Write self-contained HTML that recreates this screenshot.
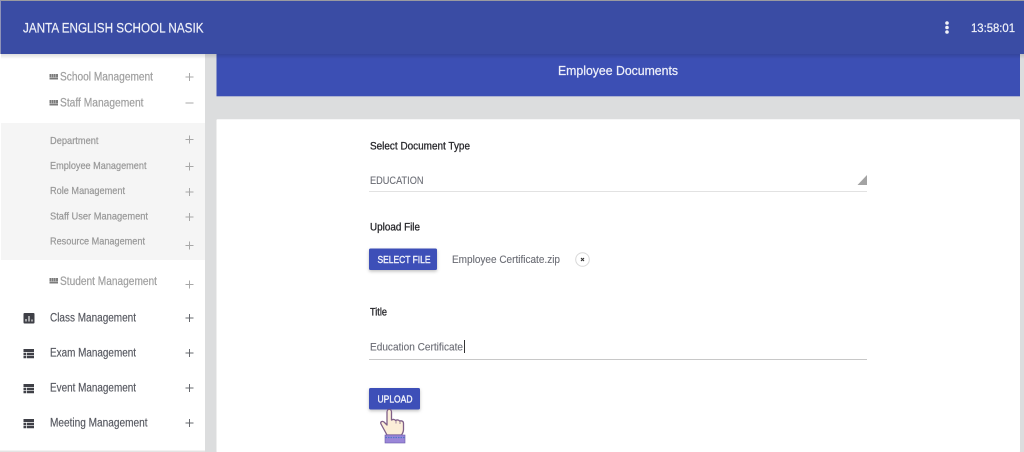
<!DOCTYPE html>
<html><head><meta charset="utf-8"><title>Employee Documents</title>
<style>
html,body{margin:0;padding:0;width:1024px;height:452px;overflow:hidden;background:#fff}
svg{display:block;position:absolute;left:0;top:0;filter:blur(.3px)}
text{font-family:"Liberation Sans",sans-serif;stroke-width:.22px;paint-order:stroke}
.n{stroke:#a0a0a0}.s{stroke:#989898}.d{stroke:#55575f;stroke-width:.16px}.l{stroke:#26262a;stroke-width:.28px}.w{stroke:#eef0fa}.v{stroke:#6b6d75;stroke-width:.12px}.b{stroke:#eef0fa;stroke-width:.38px}
</style></head><body>
<svg width="1024" height="452" viewBox="0 0 1024 452" xmlns="http://www.w3.org/2000/svg">
<defs>
<linearGradient id="sh" x1="0" y1="0" x2="0" y2="1"><stop offset="0" stop-color="#000" stop-opacity=".22"/><stop offset="1" stop-color="#000" stop-opacity="0"/></linearGradient>
<filter id="bs" x="-20%" y="-40%" width="140%" height="200%"><feDropShadow dx="0" dy="1.5" stdDeviation="1.5" flood-color="#000" flood-opacity=".25"/></filter>
</defs>
<rect width="1024" height="452" fill="#fff"/>
<!-- main bg -->
<rect x="205" y="54" width="819" height="398" fill="#dcddde"/>
<rect x="216.500" y="54" width="803.500" height="42.300" fill="#3c4fb4"/>
<text class="w" x="558" y="75" font-size="12.500" fill="#eef0fa" textLength="120" lengthAdjust="spacingAndGlyphs">Employee Documents</text>
<rect x="216.500" y="119.300" width="803.500" height="333" rx="1" fill="#fff"/>
<!-- sidebar -->
<rect x="0" y="54" width="205" height="398" fill="#fff"/>
<rect x="1" y="123" width="204" height="137" fill="#f5f5f5"/>
<rect x="0" y="450.500" width="205" height="2" fill="#e4e4e4"/>
<g fill="#a0a0a0">
<text class="n" x="60" y="80.500" font-size="11.500" textLength="93" lengthAdjust="spacingAndGlyphs">School Management</text>
<text class="n" x="60" y="106.500" font-size="11.500" textLength="83.500" lengthAdjust="spacingAndGlyphs">Staff Management</text>
<text class="n" x="60" y="285" font-size="11.500" textLength="97" lengthAdjust="spacingAndGlyphs">Student Management</text>
</g>
<g fill="#7c7c7c">
<rect x="49.500" y="74" width="8.500" height="5.500"/><rect x="49.500" y="100" width="8.500" height="5.500"/><rect x="49.500" y="278" width="8.500" height="5.500"/>
</g>
<g stroke="#fff" stroke-width=".35"><path d="M51.600 74v3.500M53.700 74v3.500M55.800 74v3.500M51.600 100v3.500M53.700 100v3.500M55.800 100v3.500M51.600 278v3.500M53.700 278v3.500M55.800 278v3.500"/><path d="M49.500 77.500h8.500M49.500 103.500h8.500M49.500 281.500h8.500"/></g>
<g fill="#989898" font-size="10.500">
<text class="s" x="50" y="144" textLength="48.500" lengthAdjust="spacingAndGlyphs">Department</text>
<text class="s" x="50" y="169" textLength="96.500" lengthAdjust="spacingAndGlyphs">Employee Management</text>
<text class="s" x="50" y="194" textLength="75" lengthAdjust="spacingAndGlyphs">Role Management</text>
<text class="s" x="50" y="219.500" textLength="98" lengthAdjust="spacingAndGlyphs">Staff User Management</text>
<text class="s" x="50" y="244.500" textLength="95" lengthAdjust="spacingAndGlyphs">Resource Management</text>
</g>
<g fill="#55575f" font-size="11.500">
<text class="d" x="50" y="321.500" textLength="86" lengthAdjust="spacingAndGlyphs">Class Management</text>
<text class="d" x="50" y="356.500" textLength="86" lengthAdjust="spacingAndGlyphs">Exam Management</text>
<text class="d" x="50" y="391.500" textLength="86" lengthAdjust="spacingAndGlyphs">Event Management</text>
<text class="d" x="50" y="426.500" textLength="97.500" lengthAdjust="spacingAndGlyphs">Meeting Management</text>
</g>
<!-- plus icons -->
<g stroke="#a8a8a8" stroke-width="1" fill="none">
<path d="M185.500 77h8M189.500 73v8"/>
<path d="M185.500 103h8"/>
<path d="M185.500 139.500h8M189.500 135.500v8"/>
<path d="M185.500 166.500h8M189.500 162.500v8"/>
<path d="M185.500 192h8M189.500 188v8"/>
<path d="M185.500 217h8M189.500 213v8"/>
<path d="M185.500 245.500h8M189.500 241.500v8"/>
<path d="M185.500 284.500h8M189.500 280.500v8"/>
</g>
<g stroke="#66686e" stroke-width="1" fill="none">
<path d="M185.500 318h8M189.500 314v8"/>
<path d="M185.500 353h8M189.500 349v8"/>
<path d="M185.500 388h8M189.500 384v8"/>
<path d="M185.500 423h8M189.500 419v8"/>
</g>
<!-- main sidebar icons -->
<rect x="23.500" y="313" width="11" height="10.500" rx="1" fill="#3f4047"/>
<path d="M26 321.500v-2.500M29 321.500v-5.500M32 321.500v-2" stroke="#e8e8e8" stroke-width="1.200" fill="none"/>
<g fill="#3f4047">
<path d="M23.500 349h10.500v3H23.500zM23.500 352.700h2.800v2.400h-2.800zM27 352.700h7v2.400h-7zM23.500 355.800h2.800v2.400h-2.800zM27 355.800h7v2.400h-7z"/>
<path d="M23.500 384h10.500v3H23.500zM23.500 387.700h2.800v2.400h-2.800zM27 387.700h7v2.400h-7zM23.500 390.800h2.800v2.400h-2.800zM27 390.800h7v2.400h-7z"/>
<path d="M23.500 419h10.500v3H23.500zM23.500 422.700h2.800v2.400h-2.800zM27 422.700h7v2.400h-7zM23.500 425.800h2.800v2.400h-2.800zM27 425.800h7v2.400h-7z"/>
</g>
<!-- header -->
<rect x="1" y="54" width="1023" height="5" fill="url(#sh)" opacity=".6"/>
<rect width="1024" height="54" fill="#3a4ca4"/>
<rect width="1024" height="1" fill="#9a9aa0"/>
<rect width="1" height="54" fill="#8f93b8"/>
<text class="w" x="23" y="32.500" font-size="13.500" fill="#eef0f8" textLength="180.500" lengthAdjust="spacingAndGlyphs">JANTA ENGLISH SCHOOL NASIK</text>
<circle cx="947" cy="23" r="1.800" fill="#f2f3f9"/><circle cx="947" cy="27.500" r="1.800" fill="#f2f3f9"/><circle cx="947" cy="32" r="1.800" fill="#f2f3f9"/>
<text class="w" x="971" y="32" font-size="11.500" fill="#eef0f8" textLength="44" lengthAdjust="spacingAndGlyphs">13:58:01</text>
<!-- form -->
<text class="l" x="370" y="149.500" font-size="11" fill="#26262a" textLength="100" lengthAdjust="spacingAndGlyphs">Select Document Type</text>
<text class="v" x="370" y="184" font-size="11" fill="#6b6d75" textLength="53.500" lengthAdjust="spacingAndGlyphs">EDUCATION</text>
<rect x="369" y="191" width="498" height="1" fill="#e2e2e2"/>
<path d="M867 175v10h-9.500z" fill="#a3a3a3"/>
<text class="l" x="370" y="230.500" font-size="11" fill="#26262a" textLength="50" lengthAdjust="spacingAndGlyphs">Upload File</text>
<rect x="369" y="248.500" width="68" height="21.500" rx="1.500" fill="#3c4fb8" filter="url(#bs)"/>
<text class="b" x="377.500" y="263" font-size="10" fill="#eef0fa" textLength="53" lengthAdjust="spacingAndGlyphs">SELECT FILE</text>
<text class="v" x="452" y="263" font-size="11" fill="#6b6d75" textLength="108" lengthAdjust="spacingAndGlyphs">Employee Certificate.zip</text>
<circle cx="582.500" cy="259.500" r="6.800" fill="#fff" stroke="#d8d8d8"/>
<path d="M581 258l3 3M584 258l-3 3" stroke="#333" stroke-width="1.100"/>
<text class="l" x="370" y="315.500" font-size="11" fill="#26262a" textLength="17" lengthAdjust="spacingAndGlyphs">Title</text>
<text class="v" x="370" y="350.500" font-size="11" fill="#6b6d75" textLength="93" lengthAdjust="spacingAndGlyphs">Education Certificate</text>
<rect x="464" y="340" width="1" height="13" fill="#333"/>
<rect x="369" y="359" width="498" height="1" fill="#c8c8c8"/>
<rect x="369" y="388" width="51" height="21.500" rx="1.500" fill="#3c4fb8" filter="url(#bs)"/>
<text class="b" x="377.500" y="402.500" font-size="10" fill="#eef0fa" textLength="35" lengthAdjust="spacingAndGlyphs">UPLOAD</text>
<!-- hand -->
<path d="M387 435l-6-11c-1-2 1-3.500 3-2l3 3v-13c0-3.500 4.500-3.500 4.500 0v8c2-1 3.500-.5 4 .5 2-1 3.500-.5 4 .5 2-.5 4 0 4 2.500v6c0 2-1 4-2 5.500z" fill="#fbeed8" stroke="#7f5f88" stroke-width="1.300" stroke-linejoin="round"/>
<path d="M396 420.500v3M400 421v3" stroke="#8c6f8f" stroke-width=".8" fill="none"/>
<rect x="385" y="435" width="20" height="8" fill="#9a86d8" stroke="#6a5aa8" stroke-width=".6"/>
<path d="M385.500 437.500h19" stroke="#4f78c8" stroke-width="1.200" stroke-dasharray="1.500 1"/>
</svg>
</body></html>
